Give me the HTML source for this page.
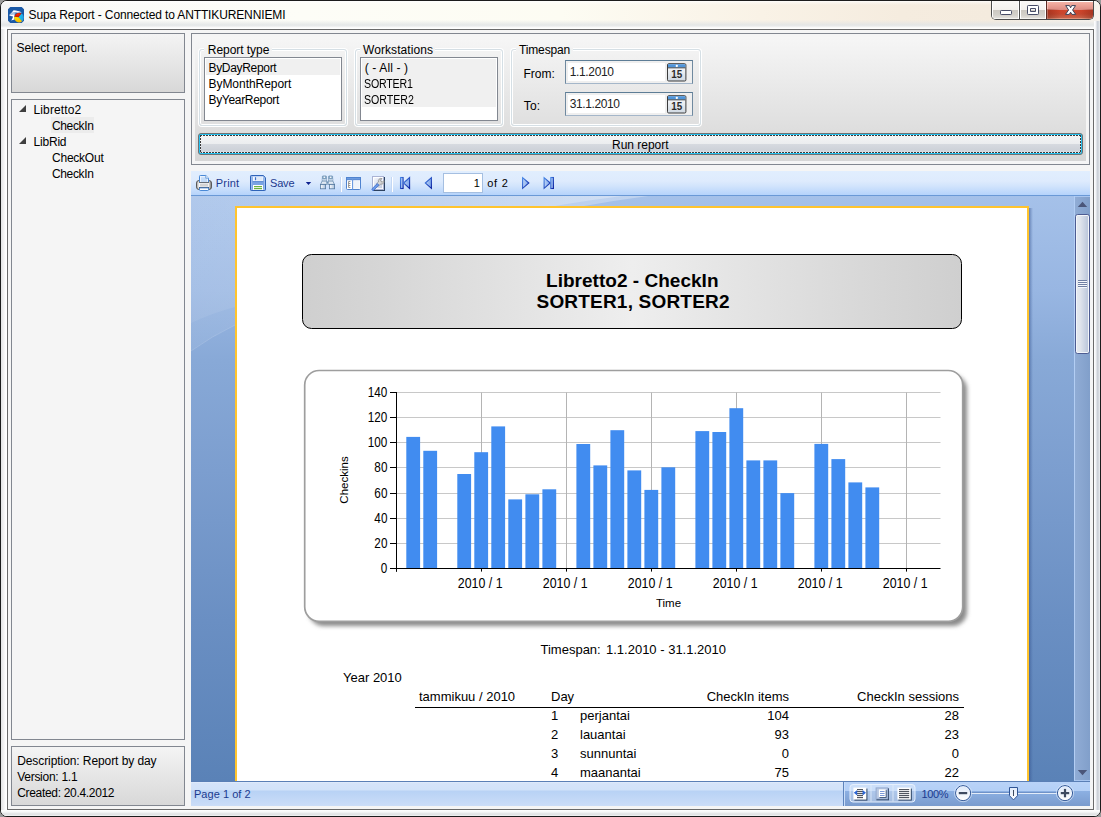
<!DOCTYPE html>
<html>
<head>
<meta charset="utf-8">
<title>Supa Report</title>
<style>
html,body{margin:0;padding:0;}
body{width:1101px;height:817px;overflow:hidden;background:#9a9a9a;font-family:"Liberation Sans",sans-serif;font-size:12px;color:#000;position:relative;}
.abs{position:absolute;}
#win{position:absolute;left:0;top:0;width:1099px;height:815px;border:1px solid #1c1c1c;border-radius:7px;background:#f4f5f6;overflow:hidden;}
#title{position:absolute;left:29px;top:7px;font-size:12px;line-height:16px;white-space:nowrap;}
#client{position:absolute;left:6px;top:28px;width:1087px;height:781px;border:1px solid #6a6a6a;background:#f5f5f5;box-sizing:border-box;}
.panel{position:absolute;box-sizing:border-box;border:1px solid #828790;background:linear-gradient(#f4f4f4,#d8d8d8);}
.t{position:absolute;white-space:nowrap;line-height:16px;}
.tb{color:#1b3a8f;}
/* tree */
#tree{background:#f5f5f5;}
.tri{position:absolute;width:0;height:0;border-left:7px solid transparent;border-bottom:7px solid #3f3f3f;}
/* groupbox */
.gb{position:absolute;box-sizing:border-box;border:1px solid #d5dfe5;border-radius:3px;box-shadow:inset 0 0 0 1px #ffffff, 0 0 0 1px #ffffff;}
.gbl{position:absolute;top:-9px;left:5px;padding:0 3px 0 3px;background:#efefef;line-height:16px;white-space:nowrap;}
.lb{position:absolute;box-sizing:border-box;border:1px solid #828790;background:#fff;}
.li{position:absolute;left:1px;right:1px;height:16px;line-height:16px;padding-left:2px;white-space:nowrap;}
.sel{background:#f0f0f0;}
.dp{position:absolute;box-sizing:border-box;border:1px solid #6f899f;border-top-color:#5d7d96;border-bottom-color:#a4b6c9;background:#efefef;width:128px;height:24px;}
.dpt{position:absolute;left:2px;top:2px;width:97px;height:18px;background:#fff;}
</style>
</head>
<body>
<div id="win">
  <div class="abs" id="tbar" style="left:0;top:0;width:1099px;height:28px;background:linear-gradient(90deg,#f3f4f5 0,#fafaf8 60px,#fdfdf7 300px,#fdfcf3 560px,#f9f2e6 760px,#f5ecdf 900px,#f4ebde 990px,#f6f2ec 1099px);"></div>
  <div class="abs" id="tbar2" style="left:0;top:0;width:1099px;height:28px;background:linear-gradient(rgba(255,255,255,.9) 0,rgba(255,255,255,.5) 1px,rgba(255,255,255,0) 4px,rgba(255,255,255,0) 19px,rgba(226,229,230,.9) 24px,rgba(232,234,235,.9) 25px,rgba(255,255,255,.95) 27px);"></div>
  <div class="abs" id="frL" style="left:0;top:28px;width:6px;height:787px;background:linear-gradient(90deg,#e2e3e4 0,#eeeeee 2px,#ffffff 5px);"></div>
  <div class="abs" id="frR" style="left:1093px;top:20px;width:6px;height:795px;background:linear-gradient(90deg,#ffffff 0,#f4f5f7 1.5px,#cdd1d8 3.5px,#d4d8de 4.5px,#eef0f3 6px);"></div>
  <div class="abs" id="frB" style="left:0;top:809px;width:1099px;height:6px;background:linear-gradient(#ffffff 0,#f6f7f7 2px,#dfe2e3 4px,#e4e6e7 5px,#f8f8f8 6px);"></div>
  <div id="client"></div>
  <!-- caption buttons (coords relative to #win padding box => page x-1,y-1) -->
  <div class="abs" id="capbtns" style="left:990px;top:-1px;width:103px;height:20px;box-sizing:border-box;border:1px solid #4c4c4c;border-top:none;border-radius:0 0 5px 5px;overflow:hidden;background:#fff;">
    <div class="abs" style="left:0;top:0;width:27px;height:19px;background:linear-gradient(#fbfaf8 0,#f3f1ed 10px,#ccc8c1 10px,#d3d0ca 15px,#e6e4e0 19px);box-shadow:inset 1px 0 0 #fff,inset -1px 0 0 #fff,inset 0 -1px 0 #f4f3f0;"></div>
    <div class="abs" style="left:27px;top:0;width:1px;height:19px;background:#4c4c4c;"></div>
    <div class="abs" style="left:28px;top:0;width:26px;height:19px;background:linear-gradient(#fbfaf8 0,#f3f1ed 10px,#ccc8c1 10px,#d3d0ca 15px,#e6e4e0 19px);box-shadow:inset 1px 0 0 #fff,inset -1px 0 0 #fff,inset 0 -1px 0 #f4f3f0;"></div>
    <div class="abs" style="left:54px;top:0;width:1px;height:19px;background:#5a2a22;"></div>
    <div class="abs" style="left:55px;top:0;width:47px;height:19px;background:linear-gradient(#f6c0b4 0,#efa89c 4px,#dc8a80 10px,#cf4228 10px,#c5462e 14px,#c86a50 19px);box-shadow:inset 1px 0 0 rgba(255,220,210,.55),inset -1px 0 0 rgba(255,220,210,.55),inset 0 -1px 0 rgba(255,200,180,.45),inset 0 2px 0 #fff;"></div>
    <div class="abs" style="left:55px;top:9px;width:47px;height:10px;background:linear-gradient(90deg,rgba(110,25,10,.38) 0,rgba(110,25,10,0) 28%,rgba(255,120,80,.12) 50%,rgba(110,25,10,0) 72%,rgba(110,25,10,.38) 100%);"></div>
    <svg class="abs" style="left:0;top:0;" width="103" height="20" viewBox="992 0 103 20">
      <rect x="1000.5" y="10.5" width="11" height="4" fill="#fff" stroke="#474c66" stroke-width="1" rx="0.8"/>
      <path d="M1027.5 6.3 q0 -0.8 .8 -.8 h9.4 q.8 0 .8 .8 v7.4 q0 .8 -.8 .8 h-9.4 q-.8 0 -.8 -.8 z M1030.5 8.5 v3 h5 v-3 z" fill="#fff" fill-rule="evenodd" stroke="#474c66" stroke-width="1"/>
      <path d="M1065.7 5.6 H1069.5 L1070.6 7.8 L1071.7 5.6 H1075.5 L1072.6 10 L1075.7 14.4 H1071.9 L1070.6 12.2 L1069.3 14.4 H1065.5 L1068.6 10 Z" fill="#fff" stroke="#3b4157" stroke-width="1" stroke-linejoin="round"/>
    </svg>
  </div>
</div>

<svg class="abs" id="appicon" style="left:8px;top:7px;" width="16" height="16" viewBox="8 7 16 16">
<defs><radialGradient id="gRed" cx=".45" cy=".35" r=".7"><stop offset="0" stop-color="#ff2a00"/><stop offset="1" stop-color="#b81800"/></radialGradient>
<linearGradient id="gYel" x1="0" y1="0" x2="0" y2="1"><stop offset="0" stop-color="#ffe400"/><stop offset="1" stop-color="#f5b800"/></linearGradient>
<linearGradient id="gCy" x1="0" y1="0" x2="1" y2="0"><stop offset="0" stop-color="#12d0ff"/><stop offset="1" stop-color="#2a9ad8"/></linearGradient></defs>
<path d="M10.3 7 h11.4 l2.3 2.3 v11.4 l-2.3 2.3 h-11.4 l-2.3 -2.3 v-11.4 z" fill="#1a59a7"/>
<path d="M9 15.2 C10.5 13.8 12 12 13.6 10.2 C16.5 10.3 19.5 11 21.8 12.6 C19 12.4 16.6 12.7 14.8 13.4 C14.3 15.5 14.3 17.6 14.6 19.6 L11 20.6 C12 19.2 12.8 17.8 13 16.4 C11.6 16.2 10.2 15.8 9 15.2 z" fill="#ffffff"/>
<path d="M11.3 13.2 l6 -1 M10.3 14.4 l5 -.6" stroke="#1a59a7" stroke-width=".5" fill="none"/>
<path d="M18.70 17.30 L14.27 16.77 A4.8 4.8 0 0 1 21.68 13.62 z" fill="url(#gRed)"/>
<path d="M18.70 17.30 L21.68 13.62 A4.8 4.8 0 0 1 22.09 21.28 z" fill="url(#gCy)"/>
<path d="M18.70 17.30 L22.09 21.28 A4.8 4.8 0 0 1 14.27 16.77 z" fill="url(#gYel)"/>
</svg>
<div class="t" id="x_title" style="left:28.6px;top:7px;letter-spacing:-0.127px;">Supa Report - Connected to ANTTIKURENNIEMI</div>

<!-- LEFT COLUMN -->
<div class="panel" id="selpanel" style="left:11px;top:33px;width:174px;height:60px;"></div>
<div class="t" id="x_sel" style="left:16.4px;top:40px;letter-spacing:-0.015px;">Select report.</div>

<div class="panel" id="tree" style="left:11px;top:99px;width:174px;height:641px;"></div>
<div class="tri" style="left:19.2px;top:105.3px;"></div>
<div class="t" id="x_lib2" style="left:33.5px;top:102px;letter-spacing:0.125px;">Libretto2</div>
<div class="abs" style="left:51px;top:117px;width:43px;height:16px;background:#ececec;"></div>
<div class="t" id="x_chk1" style="left:52.0px;top:118px;letter-spacing:-0.366px;">CheckIn</div>
<div class="tri" style="left:19.2px;top:137.3px;"></div>
<div class="t" id="x_librid" style="left:33.5px;top:134px;letter-spacing:-0.200px;">LibRid</div>
<div class="t" id="x_chkout" style="left:52.0px;top:150px;letter-spacing:-0.228px;">CheckOut</div>
<div class="t" id="x_chk2" style="left:52.0px;top:166px;letter-spacing:-0.366px;">CheckIn</div>

<div class="panel" id="descpanel" style="left:11px;top:746px;width:174px;height:60px;"></div>
<div class="t" id="x_d1" style="left:17.2px;top:753px;letter-spacing:-0.080px;">Description: Report by day</div>
<div class="t" id="x_d2" style="left:17.2px;top:769px;letter-spacing:-0.273px;">Version: 1.1</div>
<div class="t" id="x_d3" style="left:17.2px;top:785px;letter-spacing:-0.318px;">Created: 20.4.2012</div>

<!-- TOP FILTER PANEL -->
<div class="panel" id="filter" style="left:191px;top:33px;width:899px;height:132px;background:#f5f5f5;"></div>
<div class="abs" style="left:195px;top:37px;width:891px;height:124px;background:linear-gradient(#f6f6f6,#d6d6d6);"></div>

<div class="gb" style="left:199px;top:49px;width:148px;height:77px;"></div>
<div class="abs" style="left:204px;top:48px;width:68px;height:3px;background:#f2f2f2;"></div>
<div class="t" id="x_g1" style="left:207.8px;top:42px;letter-spacing:-0.050px;">Report type</div>
<div class="lb" style="left:204px;top:57px;width:138px;height:64px;"></div>
<div class="abs sel" style="left:206px;top:59px;width:134px;height:16px;"></div>
<div class="t" id="x_l1" style="left:208.5px;top:60px;letter-spacing:-0.320px;">ByDayReport</div>
<div class="t" id="x_l2" style="left:208.5px;top:76px;letter-spacing:-0.042px;">ByMonthReport</div>
<div class="t" id="x_l3" style="left:208.5px;top:92px;letter-spacing:-0.317px;">ByYearReport</div>

<div class="gb" style="left:355px;top:49px;width:148px;height:77px;"></div>
<div class="abs" style="left:360px;top:48px;width:75px;height:3px;background:#f2f2f2;"></div>
<div class="t" id="x_g2" style="left:363.0px;top:42px;letter-spacing:0.073px;">Workstations</div>
<div class="lb" style="left:360px;top:57px;width:138px;height:64px;"></div>
<div class="abs sel" style="left:362px;top:59px;width:134px;height:48px;"></div>
<div class="t" id="x_w1" style="left:364.8px;top:60px;letter-spacing:0.120px;">( - All - )</div>
<div class="t" id="x_w2" style="left:363.8px;top:76px;transform:scaleX(0.885);transform-origin:0 0;letter-spacing:-0.200px;">SORTER1</div>
<div class="t" id="x_w3" style="left:363.8px;top:92px;transform:scaleX(0.885);transform-origin:0 0;letter-spacing:-0.033px;">SORTER2</div>

<div class="gb" style="left:511px;top:49px;width:190px;height:77px;"></div>
<div class="abs" style="left:516px;top:48px;width:57px;height:3px;background:#f2f2f2;"></div>
<div class="t" id="x_g3" style="left:519.0px;top:42px;letter-spacing:-0.143px;">Timespan</div>
<div class="t" id="x_from" style="left:523.4px;top:66px;letter-spacing:-0.000px;">From:</div>
<div class="t" id="x_to" style="left:523.8px;top:98px;letter-spacing:0.100px;">To:</div>
<div class="dp" style="left:565px;top:60px;"><div class="dpt"></div><svg class="abs" style="left:101px;top:2px;" width="20" height="19" viewBox="0 0 20 19"><defs><linearGradient id="gCal" x1="0" y1="0" x2="0" y2="1"><stop offset="0" stop-color="#ffffff"/><stop offset="1" stop-color="#cfd8e1"/></linearGradient></defs><rect x=".5" y=".7" width="18.4" height="17.3" rx="1.2" fill="url(#gCal)" stroke="#3c3c3c" stroke-width="1"/><rect x="1" y="1.2" width="17.4" height="3.4" fill="#4f95da"/><rect x="1" y="4.4" width="17.4" height=".9" fill="#3c3c3c"/><circle cx="9.8" cy="2.9" r="1.15" fill="#fff"/><text x="9.8" y="15.3" text-anchor="middle" font-family="Liberation Sans, sans-serif" font-size="10.2" font-weight="bold" fill="#2b2b2b" textLength="11" lengthAdjust="spacingAndGlyphs">15</text></svg></div>
<div class="t" id="x_date1" style="left:569.8px;top:63.5px;color:#222;letter-spacing:-0.371px;">1.1.2010</div>
<div class="dp" style="left:565px;top:92px;"><div class="dpt"></div><svg class="abs" style="left:101px;top:2px;" width="20" height="19" viewBox="0 0 20 19"><defs><linearGradient id="gCal2" x1="0" y1="0" x2="0" y2="1"><stop offset="0" stop-color="#ffffff"/><stop offset="1" stop-color="#cfd8e1"/></linearGradient></defs><rect x=".5" y=".7" width="18.4" height="17.3" rx="1.2" fill="url(#gCal2)" stroke="#3c3c3c" stroke-width="1"/><rect x="1" y="1.2" width="17.4" height="3.4" fill="#4f95da"/><rect x="1" y="4.4" width="17.4" height=".9" fill="#3c3c3c"/><circle cx="9.8" cy="2.9" r="1.15" fill="#fff"/><text x="9.8" y="15.3" text-anchor="middle" font-family="Liberation Sans, sans-serif" font-size="10.2" font-weight="bold" fill="#2b2b2b" textLength="11" lengthAdjust="spacingAndGlyphs">15</text></svg></div>
<div class="t" id="x_date2" style="left:569.8px;top:95.5px;color:#222;letter-spacing:-0.400px;">31.1.2010</div>

<!-- Run button -->
<div class="abs" id="runbtn" style="left:198px;top:133px;width:885px;height:22px;box-sizing:border-box;border:1px solid #707070;border-radius:3px;background:#25c4f3;">
<div class="abs" style="left:1px;top:1px;right:1px;bottom:1px;border-radius:1px;background:linear-gradient(#f4f5f6 0,#ebedef 9px,#d6dae0 9px,#cdd2d9 15px,#dde1e6 18px);"></div>
<div class="abs" style="left:1px;top:1px;right:1px;height:1px;background:repeating-linear-gradient(90deg,#3a3a3a 0,#3a3a3a 1.6px,rgba(255,255,255,.6) 1.6px,rgba(255,255,255,.6) 3px);"></div>
<div class="abs" style="left:1px;bottom:1px;right:1px;height:1px;background:repeating-linear-gradient(90deg,#3a3a3a 0,#3a3a3a 1.6px,rgba(255,255,255,.6) 1.6px,rgba(255,255,255,.6) 3px);"></div>
<div class="abs" style="left:1px;top:1px;bottom:1px;width:1px;background:repeating-linear-gradient(180deg,#3a3a3a 0,#3a3a3a 1.6px,rgba(255,255,255,.6) 1.6px,rgba(255,255,255,.6) 3px);"></div>
<div class="abs" style="right:1px;top:1px;bottom:1px;width:1px;background:repeating-linear-gradient(180deg,#3a3a3a 0,#3a3a3a 1.6px,rgba(255,255,255,.6) 1.6px,rgba(255,255,255,.6) 3px);"></div>
</div>
<div class="t" id="x_run" style="left:612.0px;top:137px;letter-spacing:-0.023px;">Run report</div>

<!-- REPORT VIEWER -->
<div class="abs" id="viewer" style="left:191px;top:171px;width:899px;height:635px;background:linear-gradient(#a5c1e9 25px,#98b6e2 120px,#88a9d7 190px,#7c9ecf 300px,#6a8fc3 450px,#5a82b7 610px);"></div>
<svg class="abs" id="swoosh" style="left:191px;top:196px;" width="883" height="170" viewBox="191 196 883 170"><defs><linearGradient id="gSw" gradientUnits="userSpaceOnUse" x1="191" y1="0" x2="650" y2="0"><stop offset="0" stop-color="#fff" stop-opacity=".07"/><stop offset=".2" stop-color="#fff" stop-opacity=".09"/><stop offset="1" stop-color="#fff" stop-opacity=".3"/></linearGradient></defs><path d="M191 196 H648 Q420 226 235 325 Q212 336 191 351 z" fill="url(#gSw)"/><path d="M191 196 H622 Q400 224 235 307 Q212 313 191 323 z" fill="url(#gSw)"/><path d="M191 351 Q212 336 235 325" stroke="rgba(255,255,255,.14)" stroke-width="1" fill="none"/></svg>
<div class="abs" id="toolbar" style="left:191px;top:171px;width:899px;height:24px;background:linear-gradient(#e1eefe 0,#deebfd 10px,#d2e4fc 15px,#b5d3fb 24px);border-bottom:1px solid #6a99d6;"></div>
<div class="abs" id="pshadow" style="left:1029px;top:208px;width:4px;height:573px;background:linear-gradient(90deg,rgba(50,80,140,.55),rgba(50,80,140,.25) 50%,rgba(50,80,140,0));"></div>
<div class="abs" id="page" style="left:235px;top:206px;width:794px;height:575px;background:#fff;border:2px solid #ffc42e;border-bottom:none;box-sizing:border-box;"></div>
<svg class="abs" id="rep" style="left:0;top:0;" width="1101" height="817" viewBox="0 0 1101 817" font-family="Liberation Sans, sans-serif">
<defs>
<linearGradient id="hg" x1="0" x2="1" y1="0" y2="0"><stop offset="0" stop-color="#cfcfcf"/><stop offset="0.12" stop-color="#d6d6d6"/><stop offset="0.5" stop-color="#eeeeee"/><stop offset="0.88" stop-color="#d6d6d6"/><stop offset="1" stop-color="#cfcfcf"/></linearGradient>
<filter id="sh" x="-0.05" y="-0.05" width="1.15" height="1.15"><feGaussianBlur stdDeviation="2.3"/></filter>
</defs>
<rect x="302.5" y="254.5" width="659" height="74" rx="9" ry="9" fill="url(#hg)" stroke="#000" stroke-width="1"/>
<text x="546" y="287" textLength="172.5" lengthAdjust="spacing" font-size="19" font-weight="bold">Libretto2 - CheckIn</text>
<text x="536.5" y="308" textLength="193" lengthAdjust="spacing" font-size="19" font-weight="bold">SORTER1, SORTER2</text>
<rect x="309" y="375" width="658" height="251" rx="14.5" ry="14.5" fill="#8a8a8a" filter="url(#sh)"/>
<rect x="304.7" y="370.5" width="658" height="250.8" rx="14.5" ry="14.5" fill="#fff" stroke="#9e9e9e" stroke-width="1.7"/>
<g stroke="#c8c8c8" stroke-width="1">
<line x1="397" y1="543.5" x2="940.5" y2="543.5"/>
<line x1="397" y1="518.5" x2="940.5" y2="518.5"/>
<line x1="397" y1="493.5" x2="940.5" y2="493.5"/>
<line x1="397" y1="467.5" x2="940.5" y2="467.5"/>
<line x1="397" y1="442.5" x2="940.5" y2="442.5"/>
<line x1="397" y1="417.5" x2="940.5" y2="417.5"/>
<line x1="397" y1="392.5" x2="940.5" y2="392.5"/>
<line x1="481.5" y1="392.5" x2="481.5" y2="568" stroke="#b4b4b4"/>
<line x1="566.5" y1="392.5" x2="566.5" y2="568" stroke="#b4b4b4"/>
<line x1="651.5" y1="392.5" x2="651.5" y2="568" stroke="#b4b4b4"/>
<line x1="736.5" y1="392.5" x2="736.5" y2="568" stroke="#b4b4b4"/>
<line x1="821.5" y1="392.5" x2="821.5" y2="568" stroke="#b4b4b4"/>
<line x1="906.5" y1="392.5" x2="906.5" y2="568" stroke="#b4b4b4"/>
</g>
<g fill="#418cf0">
<rect x="406.3" y="436.9" width="13.8" height="131.6"/>
<rect x="423.3" y="450.8" width="13.8" height="117.7"/>
<rect x="457.3" y="474.0" width="13.8" height="94.5"/>
<rect x="474.3" y="452.2" width="13.8" height="116.3"/>
<rect x="491.3" y="426.4" width="13.8" height="142.1"/>
<rect x="508.3" y="499.4" width="13.8" height="69.1"/>
<rect x="525.4" y="494.3" width="13.8" height="74.2"/>
<rect x="542.4" y="489.3" width="13.8" height="79.2"/>
<rect x="576.4" y="444.0" width="13.8" height="124.5"/>
<rect x="593.4" y="465.4" width="13.8" height="103.1"/>
<rect x="610.4" y="430.2" width="13.8" height="138.3"/>
<rect x="627.4" y="470.4" width="13.8" height="98.1"/>
<rect x="644.4" y="489.9" width="13.8" height="78.6"/>
<rect x="661.4" y="467.3" width="13.8" height="101.2"/>
<rect x="695.4" y="431.1" width="13.8" height="137.4"/>
<rect x="712.4" y="432.0" width="13.8" height="136.5"/>
<rect x="729.4" y="408.2" width="13.8" height="160.3"/>
<rect x="746.4" y="460.4" width="13.8" height="108.1"/>
<rect x="763.4" y="460.4" width="13.8" height="108.1"/>
<rect x="780.4" y="493.1" width="13.8" height="75.4"/>
<rect x="814.4" y="443.9" width="13.8" height="124.6"/>
<rect x="831.4" y="459.1" width="13.8" height="109.4"/>
<rect x="848.4" y="482.4" width="13.8" height="86.1"/>
<rect x="865.4" y="487.4" width="13.8" height="81.1"/>
</g>
<g stroke="#000" stroke-width="1">
<line x1="396.5" y1="392" x2="396.5" y2="571.6"/>
<line x1="396" y1="568.5" x2="940.5" y2="568.5"/>
<line x1="390" y1="568.5" x2="396" y2="568.5"/>
<line x1="390" y1="543.5" x2="396" y2="543.5"/>
<line x1="390" y1="518.5" x2="396" y2="518.5"/>
<line x1="390" y1="493.5" x2="396" y2="493.5"/>
<line x1="390" y1="467.5" x2="396" y2="467.5"/>
<line x1="390" y1="442.5" x2="396" y2="442.5"/>
<line x1="390" y1="417.5" x2="396" y2="417.5"/>
<line x1="390" y1="392.5" x2="396" y2="392.5"/>
<line x1="396.5" y1="569" x2="396.5" y2="571.6"/>
<line x1="481.5" y1="569" x2="481.5" y2="571.6"/>
<line x1="566.5" y1="569" x2="566.5" y2="571.6"/>
<line x1="651.5" y1="569" x2="651.5" y2="571.6"/>
<line x1="736.5" y1="569" x2="736.5" y2="571.6"/>
<line x1="821.5" y1="569" x2="821.5" y2="571.6"/>
<line x1="906.5" y1="569" x2="906.5" y2="571.6"/>
</g>
<g font-size="13.8" fill="#000">
<text transform="translate(387.4,572.9) scale(0.85,1)" text-anchor="end">0</text>
<text transform="translate(387.4,547.8) scale(0.85,1)" text-anchor="end">20</text>
<text transform="translate(387.4,522.6) scale(0.85,1)" text-anchor="end">40</text>
<text transform="translate(387.4,497.5) scale(0.85,1)" text-anchor="end">60</text>
<text transform="translate(387.4,472.3) scale(0.85,1)" text-anchor="end">80</text>
<text transform="translate(387.4,447.2) scale(0.85,1)" text-anchor="end">100</text>
<text transform="translate(387.4,422.0) scale(0.85,1)" text-anchor="end">120</text>
<text transform="translate(387.4,396.9) scale(0.85,1)" text-anchor="end">140</text>
<text transform="translate(480.2,588) scale(0.898,1)" text-anchor="middle">2010 / 1</text>
<text transform="translate(565.2,588) scale(0.898,1)" text-anchor="middle">2010 / 1</text>
<text transform="translate(650.2,588) scale(0.898,1)" text-anchor="middle">2010 / 1</text>
<text transform="translate(735.2,588) scale(0.898,1)" text-anchor="middle">2010 / 1</text>
<text transform="translate(820.2,588) scale(0.898,1)" text-anchor="middle">2010 / 1</text>
<text transform="translate(905.2,588) scale(0.898,1)" text-anchor="middle">2010 / 1</text>
</g>
<text x="668.5" y="607" text-anchor="middle" font-size="11.5">Time</text>
<text transform="translate(348,480) rotate(-90)" text-anchor="middle" font-size="11.5">Checkins</text>
<g font-size="13">
<text x="540.5" y="654">Timespan:</text><text x="606" y="654">1.1.2010 - 31.1.2010</text>
<text x="343" y="682">Year 2010</text>
<text x="419" y="701">tammikuu / 2010</text>
<text x="551" y="701">Day</text>
<text x="789" y="701" text-anchor="end">CheckIn items</text>
<text x="959" y="701" text-anchor="end">CheckIn sessions</text>
<text x="551" y="720">1</text><text x="580" y="720">perjantai</text><text x="789" y="720" text-anchor="end">104</text><text x="959" y="720" text-anchor="end">28</text>
<text x="551" y="739">2</text><text x="580" y="739">lauantai</text><text x="789" y="739" text-anchor="end">93</text><text x="959" y="739" text-anchor="end">23</text>
<text x="551" y="758">3</text><text x="580" y="758">sunnuntai</text><text x="789" y="758" text-anchor="end">0</text><text x="959" y="758" text-anchor="end">0</text>
<text x="551" y="777">4</text><text x="580" y="777">maanantai</text><text x="789" y="777" text-anchor="end">75</text><text x="959" y="777" text-anchor="end">22</text>
</g>
<line x1="415" y1="707.5" x2="964" y2="707.5" stroke="#000" stroke-width="1"/>
</svg>
<div class="abs" id="status" style="left:191px;top:781px;width:899px;height:25px;box-sizing:border-box;border-top:1px solid #5a7fb6;background:linear-gradient(#b9d3f8 0,#b3cff6 9px,#8cb0e3 9px,#7a9bcd 24px);"></div>
<div class="abs" id="statusL" style="left:191px;top:782px;width:652px;height:24px;background:linear-gradient(#e6effc 0,#d5e4fa 1px,#d1e2f9 8px,#b8d2f5 9px,#cbddf8 24px);"></div>

<svg class="abs" id="ui" style="left:0;top:0;" width="1101" height="817" viewBox="0 0 1101 817">
<defs>
<linearGradient id="gNav" x1="0" y1="0" x2="1" y2="1"><stop offset="0" stop-color="#4a8ae8"/><stop offset="1" stop-color="#0a1e9e"/></linearGradient>
<linearGradient id="gNavF" x1="0" y1="0" x2="1" y2="0"><stop offset="0" stop-color="#bdd4f8"/><stop offset="1" stop-color="#7ba4e9"/></linearGradient>
<linearGradient id="gPr" x1="0" y1="0" x2="1" y2="0"><stop offset="0" stop-color="#9a9a9a"/><stop offset=".18" stop-color="#fafafa"/><stop offset=".8" stop-color="#f2f2f2"/><stop offset="1" stop-color="#6a6a6a"/></linearGradient>
<linearGradient id="gThumb" x1="0" y1="0" x2="1" y2="0"><stop offset="0" stop-color="#e6eaf0"/><stop offset=".35" stop-color="#dfe4ec"/><stop offset="1" stop-color="#b5c2d8"/></linearGradient>
<linearGradient id="gTrack" x1="0" y1="0" x2="1" y2="0"><stop offset="0" stop-color="#90acd5"/><stop offset="1" stop-color="#819fca"/></linearGradient>
<linearGradient id="gCirc" x1="0" y1="0" x2="0" y2="1"><stop offset="0" stop-color="#dfeafa"/><stop offset=".5" stop-color="#eef3fb"/><stop offset="1" stop-color="#ffffff"/></linearGradient>
<linearGradient id="gBin" x1="0" y1="0" x2="1" y2="0"><stop offset="0" stop-color="#ffffff"/><stop offset="1" stop-color="#a9c0da"/></linearGradient>
<linearGradient id="gWr" x1="0" y1="0" x2="1" y2="1"><stop offset="0" stop-color="#f4f6fb"/><stop offset="1" stop-color="#c3cbe0"/></linearGradient>
</defs>

<!-- PRINTER 196..212 x 175..191 -->
<g>
<rect x="196.5" y="180.5" width="15" height="9" rx="2.6" fill="url(#gPr)" stroke="#565656" stroke-width="1"/>
<path d="M199.5 182.5 V176.3 q0 -.8 .8 -.8 H205.8 l2.7 2.7 V182.5 z" fill="#e9f2fd" stroke="#4788d6" stroke-width="1"/>
<path d="M201 177.2 h4 l2 2 v2.8 h-6 z" fill="#c3dbf8"/>
<path d="M205.8 175.5 v2.7 h2.7" fill="#fff" stroke="#4788d6" stroke-width=".8"/>
<rect x="199" y="182.1" width="10" height=".9" fill="#6a6a6a"/>
<rect x="200" y="183.6" width="8" height="3" fill="#d4d4d4"/>
<rect x="199" y="187" width="10" height=".9" fill="#3a3a3a"/>
<path d="M199.5 187.9 h9 v1.9 q0 .7 -.7 .7 h-7.6 q-.7 0 -.7 -.7 z" fill="#fff" stroke="#4788d6" stroke-width="1"/>
</g>

<!-- SAVE 250..266 x 175..191 -->
<g>
<path d="M250.5 176.3 q0 -.8 .8 -.8 H263.3 l2.2 2.2 V189.7 q0 .8 -.8 .8 H251.3 q-.8 0 -.8 -.8 z" fill="#7ba4e2" stroke="#2f63b8" stroke-width="1"/>
<path d="M251.6 176.6 H263 l1.5 1.5 V189.4 H251.6 z" fill="none" stroke="#a9c6f2" stroke-width=".8"/>
<rect x="252.8" y="176.6" width="10.4" height="4.6" fill="#f4f8fe"/>
<rect x="257" y="177" width="5.5" height="3.6" fill="#dfe9f7"/>
<rect x="254.9" y="177.2" width="1.3" height="3" fill="#3c70c8"/>
<rect x="252.6" y="181.2" width="10.8" height=".9" fill="#5a88d2"/>
<rect x="253" y="185" width="10" height="5" fill="#ffffff"/>
<rect x="254" y="186" width="8" height="1.2" fill="#6cb33f"/>
<rect x="254" y="188" width="8" height="1.2" fill="#6cb33f"/>
</g>
<!-- dropdown arrow -->
<path d="M305.8 182 h5.4 l-2.7 3 z" fill="#0e2290"/>

<!-- BINOCULARS 320..335 x 176..189 -->
<g>
<rect x="322.4" y="175.9" width="4.0" height="2.8" rx=".6" fill="#86a8c6" stroke="#5b83a8" stroke-width=".6"/>
<rect x="323.6" y="176.6" width="1.5" height="1.3" fill="#ffffff"/>
<rect x="322.1" y="178.7" width="4.6" height="2.4" fill="#f3f7fb" stroke="#6b90b3" stroke-width=".6"/>
<rect x="322.6" y="179.3" width="3.6" height="1" fill="#a9c2da"/>
<path d="M322.1 181.1 H326.7 L327.2 184.4 H320.6 z" fill="#dfe9f3" stroke="#5b83a8" stroke-width=".7"/>
<rect x="320.4" y="184.4" width="5.2" height="4.4" fill="url(#gBin)" stroke="#54799f" stroke-width=".8"/>
<rect x="328.6" y="175.9" width="4.0" height="2.8" rx=".6" fill="#86a8c6" stroke="#5b83a8" stroke-width=".6"/>
<rect x="329.9" y="176.6" width="1.5" height="1.3" fill="#ffffff"/>
<rect x="328.3" y="178.7" width="4.6" height="2.4" fill="#f3f7fb" stroke="#6b90b3" stroke-width=".6"/>
<rect x="328.8" y="179.3" width="3.6" height="1" fill="#a9c2da"/>
<path d="M328.3 181.1 H332.9 L334.4 184.4 H327.8 z" fill="#dfe9f3" stroke="#5b83a8" stroke-width=".7"/>
<rect x="329.4" y="184.4" width="5.2" height="4.4" fill="url(#gBin)" stroke="#54799f" stroke-width=".8"/>
<rect x="326.8" y="181.8" width="1.6" height="1.6" fill="#e8f0f8" stroke="#6b90b3" stroke-width=".5"/>
</g>

<!-- separators -->
<rect x="340" y="177" width="1" height="15" fill="#c3d7f4"/><rect x="341" y="177" width="1" height="15" fill="#ffffff"/>
<rect x="391" y="177" width="1" height="15" fill="#c3d7f4"/><rect x="392" y="177" width="1" height="15" fill="#ffffff"/>

<!-- DOC MAP 346..361 x 177..190 -->
<g>
<rect x="346.5" y="177.5" width="14" height="12" rx="1" fill="#ffffff" stroke="#4f83cf" stroke-width="1"/>
<rect x="346.5" y="177.5" width="14" height="2.2" fill="#6c9be0" stroke="#4f83cf" stroke-width="1"/>
<rect x="352" y="179.5" width="1.2" height="10" fill="#6c9be0"/>
<rect x="354" y="181" width="5.6" height="7.6" fill="#eef3fa"/>
<path d="M348.6 181.5 v6 h1.8 M348.6 183.5 h1.8 M348.6 185.5 h1.8 M348.6 181.5 h1.8" fill="none" stroke="#8a8a8a" stroke-width=".9"/>
</g>

<!-- PARAMS (wrench) 370..385 x 176..191 -->
<g>
<rect x="373" y="177" width="12" height="14" fill="#2c4260"/>
<rect x="372.5" y="176.5" width="11" height="13" fill="#ffffff" stroke="#aab3d3" stroke-width="1"/>
<rect x="374" y="178" width="8.2" height="10.2" fill="url(#gWr)"/>
<path d="M376.2 184.2 l2.3 -2.3 a2.6 2.6 0 0 1 3.4 -3.3 l-1.5 1.5 l.6 1.4 l1.4 .6 l1.5 -1.5 a2.6 2.6 0 0 1 -3.3 3.4 l-2.3 2.3 z" fill="#d6d6d6" stroke="#8c8c8c" stroke-width=".8"/>
<path d="M377.3 183.5 l1.6 1.6 l-5.2 5.2 a1.15 1.15 0 0 1 -1.6 -1.6 z" fill="#6d9ae6" stroke="#3d6fd0" stroke-width=".8"/>
</g>

<!-- NAV -->
<g stroke="url(#gNav)" stroke-width="1.1" fill="url(#gNavF)" stroke-linejoin="miter">
<rect x="400.5" y="177.5" width="2.6" height="11"/>
<path d="M403.6 183 L409.6 177.6 V188.4 z"/>
<path d="M425.3 183 L431.4 177.6 V188.4 z"/>
<path d="M528.8 183 L522.6 177.6 V188.4 z"/>
<path d="M550.2 183 L544.1 177.6 V188.4 z"/>
<rect x="550.8" y="177.5" width="2.6" height="11"/>
</g>

<!-- SCROLLBAR -->
<rect x="1074" y="196" width="1" height="585" fill="#b3cef4"/>
<rect x="1075" y="196" width="15" height="1" fill="#a9c6f0"/>
<rect x="1075" y="197" width="15" height="583" fill="url(#gTrack)"/>
<rect x="1075" y="780" width="15" height="1" fill="#a9c6f0"/>
<path d="M1082.5 201.8 L1087.2 207 H1077.8 z" fill="#4b5679"/>
<path d="M1082.5 775.2 L1087.2 770 H1077.8 z" fill="#4b5679"/>
<rect x="1075.5" y="214.5" width="14" height="139" rx="2.2" fill="url(#gThumb)" stroke="#4d5c92" stroke-width="1"/>
<rect x="1076.5" y="215.5" width="12" height="137" rx="1.2" fill="none" stroke="#f3f6fa" stroke-width="1"/>
<g fill="#6f7fa3"><rect x="1078" y="280" width="9" height="1"/><rect x="1078" y="282" width="9" height="1"/><rect x="1078" y="284" width="9" height="1"/><rect x="1078" y="286" width="9" height="1"/></g>
<g fill="#f4f7fb"><rect x="1078" y="281" width="9" height="1"/><rect x="1078" y="283" width="9" height="1"/><rect x="1078" y="285" width="9" height="1"/><rect x="1078" y="287" width="9" height="1"/></g>

<!-- STATUS BAR widgets -->
<rect x="843" y="782" width="1" height="24" fill="#5d84bd"/><rect x="844" y="782" width="1" height="24" fill="#c9ddf8"/>
<rect x="850" y="784.5" width="65" height="17.5" rx="3" fill="rgba(255,255,255,.3)" stroke="rgba(232,241,253,.95)" stroke-width="1"/>
<rect x="870.5" y="785" width="1" height="16.5" fill="rgba(225,236,252,.85)"/><rect x="892.5" y="785" width="1" height="16.5" fill="rgba(225,236,252,.85)"/>
<!-- icon1 -->
<rect x="854.4" y="788.6" width="13" height="12" fill="#2b4262"/>
<rect x="853.4" y="787.6" width="13" height="12" fill="#ffffff"/>
<g fill="#50555f"><rect x="857" y="789" width="6" height="1.15"/><rect x="857" y="791" width="6" height="1.15"/><rect x="857" y="793" width="6" height="1.15"/><rect x="857" y="795" width="6" height="1.15"/><rect x="857" y="797" width="6" height="1.15"/></g>
<path d="M853.8 792.7 l3.4 -2.7 v5.4 z M866 792.7 l-3.4 -2.7 v5.4 z" fill="#2b66d6"/>
<!-- icon2 -->
<rect x="876.4" y="788.3" width="12.6" height="12" fill="#2b4262"/>
<rect x="875.6" y="787.4" width="12.6" height="12" fill="#95abcf"/>
<rect x="876.6" y="788.4" width="10.6" height="10" fill="#b9c9e3"/>
<rect x="879.6" y="790.2" width="7" height="7.6" fill="#30476a"/>
<rect x="878.9" y="789.4" width="6.8" height="7.6" fill="#ffffff"/>
<g fill="#7c9ad8"><rect x="880" y="791" width="4.6" height="1"/><rect x="880" y="793" width="4.6" height="1"/><rect x="880" y="795" width="4.6" height="1"/></g>
<!-- icon3 -->
<rect x="898.4" y="788.6" width="13.4" height="12" fill="#2b4262"/>
<rect x="897.4" y="787.6" width="13.4" height="12" fill="#ffffff"/>
<g fill="#50555f"><rect x="899" y="789" width="10.2" height="1.15"/><rect x="899" y="791" width="10.2" height="1.15"/><rect x="899" y="793" width="10.2" height="1.15"/><rect x="899" y="795" width="10.2" height="1.15"/><rect x="899" y="797" width="10.2" height="1.15"/></g>
<!-- zoom slider -->
<rect x="971" y="792" width="87" height="1" fill="#6f92c8"/><rect x="971" y="793" width="87" height="1" fill="#e3ecf9"/>
<circle cx="963.1" cy="793.1" r="7.6" fill="url(#gCirc)" stroke="#2f5596" stroke-width="1"/>
<circle cx="963.1" cy="793.1" r="8.6" fill="none" stroke="rgba(220,232,250,.7)" stroke-width="1"/>
<rect x="958.8" y="792" width="8.4" height="2.2" fill="#3d4a60"/>
<circle cx="1065" cy="793.1" r="7.6" fill="url(#gCirc)" stroke="#2f5596" stroke-width="1"/>
<circle cx="1065" cy="793.1" r="8.6" fill="none" stroke="rgba(220,232,250,.7)" stroke-width="1"/>
<rect x="1060.8" y="792" width="8.4" height="2.2" fill="#3d4a60"/><rect x="1063.9" y="788.9" width="2.2" height="8.4" fill="#3d4a60"/>
<path d="M1009.5 787.5 h8 v8.2 l-4 4.2 l-4 -4.2 z" fill="url(#gCirc)" stroke="#2f5596" stroke-width="1" stroke-linejoin="round"/>
<rect x="1013" y="790" width="1" height="6" fill="#3d4a60"/>
</svg>
<!-- toolbar/status texts -->
<div class="t tb" id="x_print" style="left:215.8px;top:175px;font-size:11px;letter-spacing:0.175px;">Print</div>
<div class="t tb" id="x_save" style="left:270.0px;top:175px;font-size:11px;letter-spacing:-0.167px;">Save</div>
<div class="abs" id="pgbox" style="left:443px;top:173px;width:40px;height:20px;box-sizing:border-box;border:1px solid #a5bfe1;background:#fff;"></div>
<div class="t" id="x_pg1" style="left:473.8px;top:175px;font-size:11px;letter-spacing:-0.200px;">1</div>
<div class="t" id="x_of2" style="left:487.2px;top:175px;font-size:11px;letter-spacing:0.800px;">of 2</div>
<div class="t tb" id="x_page" style="left:194.0px;top:786px;font-size:11px;letter-spacing:0.030px;">Page 1 of 2</div>
<div class="t tb" id="x_zoom" style="left:921.6px;top:786px;font-size:11px;letter-spacing:-0.433px;">100%</div>

</body>
</html>
